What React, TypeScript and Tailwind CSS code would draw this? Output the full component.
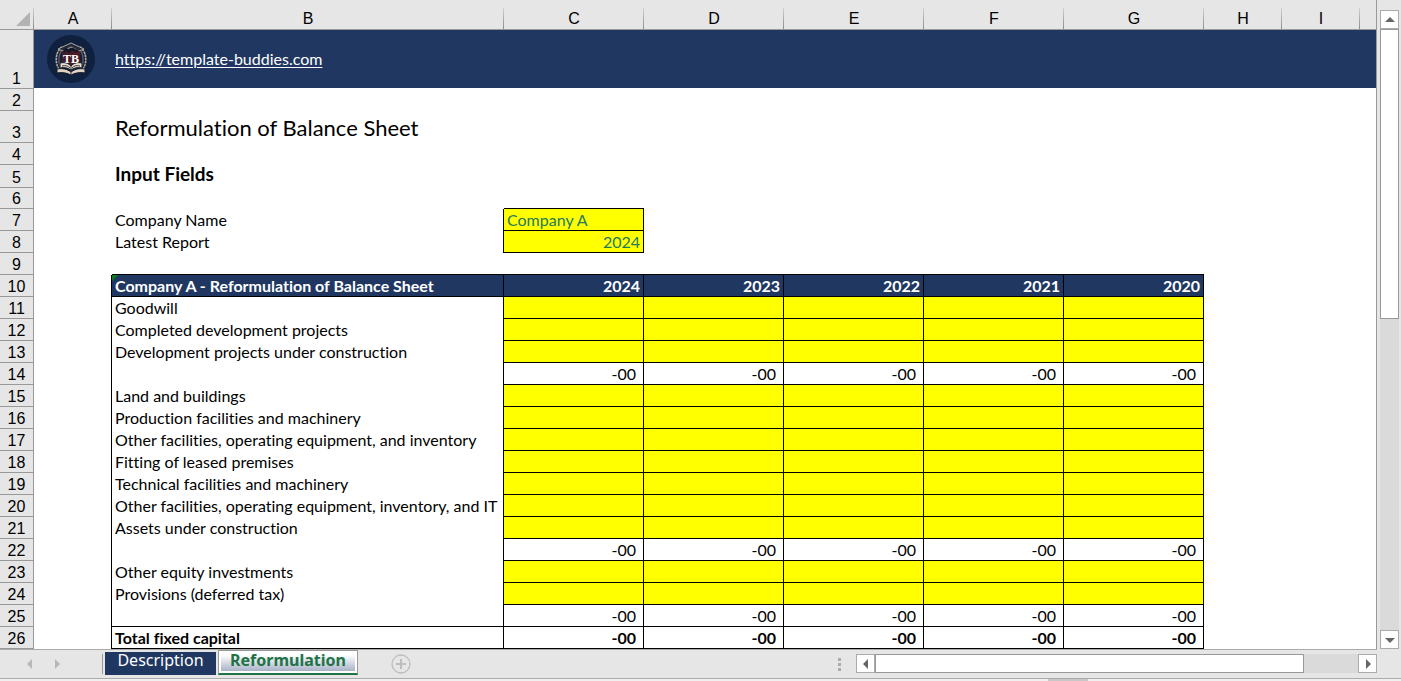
import { clsx } from "clsx";
import type { ReactNode } from "react";

type Row = { n: number; label: string; kind: "input" | "sum" | "total" };

const years = [2024, 2023, 2022, 2021, 2020];

const rows: Row[] = [
  { n: 11, label: "Goodwill", kind: "input" },
  { n: 12, label: "Completed development projects", kind: "input" },
  { n: 13, label: "Development projects under construction", kind: "input" },
  { n: 14, label: "", kind: "sum" },
  { n: 15, label: "Land and buildings", kind: "input" },
  { n: 16, label: "Production facilities and machinery", kind: "input" },
  { n: 17, label: "Other facilities, operating equipment, and inventory", kind: "input" },
  { n: 18, label: "Fitting of leased premises", kind: "input" },
  { n: 19, label: "Technical facilities and machinery", kind: "input" },
  { n: 20, label: "Other facilities, operating equipment, inventory, and IT", kind: "input" },
  { n: 21, label: "Assets under construction", kind: "input" },
  { n: 22, label: "", kind: "sum" },
  { n: 23, label: "Other equity investments", kind: "input" },
  { n: 24, label: "Provisions (deferred tax)", kind: "input" },
  { n: 25, label: "", kind: "sum" },
  { n: 26, label: "Total fixed capital", kind: "total" },
];

const inputClass = "block h-[21px] w-full bg-transparent px-[3px] leading-5 outline-none";

export default function App() {
  return (
    <div className="bg-[#e6e6e6] font-['Lato','Liberation_Sans',sans-serif] text-[16px] text-black [font-variant-ligatures:none]">
      <div className="flex">
        <div className="min-w-0 flex-1 overflow-hidden border-r border-[#999]">
          <Sheet />
        </div>
        <VerticalScrollbar />
      </div>
      <BottomBar />
    </div>
  );
}

function Sheet() {
  return (
    <table className="w-full table-fixed border-separate border-spacing-0 bg-white">
      <colgroup>
        <col className="w-[34px]" />
        <col className="w-[78px]" />
        <col className="w-[392px]" />
        {years.map((y) => (
          <col key={y} className="w-[140px]" />
        ))}
        <col className="w-[78px]" />
        <col className="w-[78px]" />
        <col />
      </colgroup>
      <thead>
        <tr className="h-[30px] bg-[#e6e6e6] font-['Liberation_Sans',sans-serif]">
          <th className="relative border-b border-[#999] p-0">
            <svg className="absolute right-1 bottom-[3px]" width="14" height="14" viewBox="0 0 14 14">
              <path d="M14 0v14H0z" fill="#b3b3b3" />
            </svg>
            <HeaderTick />
          </th>
          {["A", "B", "C", "D", "E", "F", "G", "H", "I"].map((c) => (
            <th key={c} scope="col" className="relative border-b border-[#999] p-0 pt-[9px] text-[16px] leading-5 font-normal">
              {c}
              <HeaderTick />
            </th>
          ))}
          <td className="border-b border-[#999]" />
        </tr>
      </thead>
      <tbody>
        <tr className="h-[59px]">
          <RowHeader n={1} />
          <td className="border-b border-b-white bg-[#203762] p-0">
            <Logo />
          </td>
          <td colSpan={9} className="border-b border-b-white bg-[#203762] p-0 pl-[3px] text-white">
            <a href="https://template-buddies.com" className="underline underline-offset-2">
              https://template-buddies.com
            </a>
          </td>
        </tr>
        <BlankRow n={2} className="h-[22px]" />
        <tr className="h-8">
          <RowHeader n={3} />
          <td />
          <td colSpan={9} className="p-0 pt-[2px] pl-[3px] text-[22px] leading-7">Reformulation of Balance Sheet</td>
        </tr>
        <BlankRow n={4} className="h-[22px]" />
        <tr className="h-[23px]">
          <RowHeader n={5} />
          <td />
          <td colSpan={9} className="p-0 pl-[3px] align-top text-[19px] leading-[18px] font-bold">Input Fields</td>
        </tr>
        <tr className="h-[21px]">
          <RowHeader n={6} />
          <td colSpan={2} />
          <td className="border-b border-black p-0" />
          <td colSpan={7} />
        </tr>
        <FieldRow n={7} id="company" label="Company Name">
          <input id="company" type="text" defaultValue="Company A" className={inputClass} />
        </FieldRow>
        <FieldRow n={8} id="latest" label="Latest Report">
          <input id="latest" type="text" defaultValue="2024" className={clsx(inputClass, "text-right")} />
        </FieldRow>
        <tr className="h-[22px]">
          <RowHeader n={9} />
          <td />
          <td colSpan={6} className="border-b border-black p-0" />
          <td colSpan={3} />
        </tr>

        {/* Table heading */}
        <tr className="h-[22px] font-bold text-white">
          <RowHeader n={10} />
          <td className="border-r border-black p-0" />
          <th className="relative border-r border-b border-black bg-[#203762] p-0 pl-[3px] text-left leading-5">
            <svg className="absolute top-0 left-0" width="6" height="6" viewBox="0 0 6 6">
              <path d="M0 0h6L0 6z" fill="#0a7d1c" />
            </svg>
            Company A - Reformulation of Balance Sheet
          </th>
          {years.map((y) => (
            <th key={y} className="border-r border-b border-black bg-[#203762] p-0 pr-[3px] text-right leading-5">
              {y}
            </th>
          ))}
          <td colSpan={3} />
        </tr>
        {rows.map((row) => (
          <DataRow key={row.n} row={row} />
        ))}
      </tbody>
    </table>
  );
}

function HeaderTick() {
  return <span className="absolute right-0 bottom-0 h-[21px] w-px bg-linear-to-b from-[#d0d0d0] to-[#8c8c8c]" />;
}

function RowHeader({ n }: { n: number }) {
  return (
    <th
      scope="row"
      className="border-r border-b border-[#999] bg-[#e6e6e6] p-0 text-center align-bottom font-['Liberation_Sans',sans-serif] text-[16px] leading-[18px] font-normal text-black"
    >
      {n}
    </th>
  );
}

function BlankRow({ n, className }: { n: number; className: string }) {
  return (
    <tr className={className}>
      <RowHeader n={n} />
      <td colSpan={10} />
    </tr>
  );
}

function FieldRow({ n, id, label, children }: { n: number; id: string; label: string; children: ReactNode }) {
  return (
    <tr className="h-[22px]">
      <RowHeader n={n} />
      <td />
      <td className="border-r border-black p-0 pl-[3px] leading-5">
        <label htmlFor={id}>{label}</label>
      </td>
      <td className="border-r border-b border-black bg-[#ffff00] p-0 text-[#1f7a5c]">{children}</td>
      <td colSpan={7} />
    </tr>
  );
}

function DataRow({ row }: { row: Row }) {
  const closed = row.n >= 25;
  return (
    <tr className={clsx("h-[22px]", row.kind === "total" && "font-bold")}>
      <RowHeader n={row.n} />
      <td className="border-r border-black p-0" />
      <td className={clsx("border-r border-black p-0 pl-[3px] leading-5 whitespace-nowrap", closed && "border-b")}>
        {row.label}
      </td>
      {years.map((y) =>
        row.kind === "input" ? (
          <td key={y} className="border-r border-b border-black bg-[#ffff00] p-0">
            <input type="text" aria-label={`${row.label} ${y}`} className={clsx(inputClass, "text-right")} />
          </td>
        ) : (
          <td key={y} className="border-r border-b border-black p-0 pr-[7px] text-right leading-5">
            -00
          </td>
        ),
      )}
      <td colSpan={3} />
    </tr>
  );
}

function Logo() {
  return (
    <svg className="ml-[13px] block" width="48" height="48" viewBox="0 0 48 48" fill="none">
      <circle cx="24" cy="24" r="24" fill="#10203f" />
      <path d="M14 37C7 29 8 17 15 12M34 37c7-8 6-20-1-25" stroke="#b5aa9b" strokeWidth="1.6" strokeDasharray="2.5 .7" />
      <path d="M16 36C10 29 11 19 16 14M32 36c6-7 5-17 0-22" stroke="#6e625c" strokeWidth="1.2" />
      <path d="M11 14l13-6 13 6-5 2-8-4-8 4z" fill="#252b3b" stroke="#b9b3a8" strokeWidth=".9" />
      <path d="M15 17c3-3 15-3 18 0v13H15z" fill="#481d28" />
      <path d="M17 17l2-3 3 3 4-3 3 2 2-1" stroke="#14182a" strokeWidth="2.4" />
      <path d="M13 28c5-1 8 0 11 3 3-3 6-4 11-3v5c-5-1-8 0-11 2-3-2-6-3-11-2z" fill="#e7dfd0" stroke="#171b2a" />
      <path d="M10 34c6-1 10 0 14 3 4-3 8-4 14-3v4c-6-1-10 0-14 2-4-2-8-3-14-2z" fill="#ddd3c1" stroke="#171b2a" />
      <path d="M24 31v8M15 31c4-1 6 0 8 2M33 31c-4-1-6 0-8 2" stroke="#3c3334" strokeWidth="1" />
      <text x="24" y="28" textAnchor="middle" fill="#fff" fontFamily="Liberation Serif, serif" fontSize="12" fontWeight="700">
        TB
      </text>
    </svg>
  );
}

function Arrow({ d }: { d: string }) {
  return (
    <svg width="10" height="10" viewBox="0 0 10 10">
      <path d={d} fill="#666" />
    </svg>
  );
}

const scrollButton = "flex size-[19px] shrink-0 items-center justify-center border border-[#ababab] bg-white";

function VerticalScrollbar() {
  return (
    <div className="flex w-6 flex-col pt-[10px] pr-[2px] pl-[3px]">
      <button type="button" aria-label="Scroll up" className={scrollButton}>
        <Arrow d="M0 7h10L5 2z" />
      </button>
      <div className="flex-1 bg-[#dadada]">
        <div className="h-[290px] border border-[#999] bg-white" />
      </div>
      <button type="button" aria-label="Scroll down" className={scrollButton}>
        <Arrow d="M0 3h10L5 8z" />
      </button>
    </div>
  );
}

function BottomBar() {
  return (
    <div>
      <div className="flex h-[29px] items-start">
        <div className="flex flex-1 items-start border-t border-[#ababab]">
          <div className="flex w-[102px] gap-5 pt-[9px] pl-[25px]">
            <button type="button" aria-label="Previous sheet">
              <svg width="8" height="10" viewBox="0 0 8 10"><path d="M7 0v10L2 5z" fill="#b8b8b8" /></svg>
            </button>
            <button type="button" aria-label="Next sheet">
              <svg width="8" height="10" viewBox="0 0 8 10"><path d="M2 0v10l5-5z" fill="#b8b8b8" /></svg>
            </button>
          </div>
          <div className="mt-1 h-5 w-[3px] border-l border-[#999]" />
          <button
            type="button"
            className="mt-[2px] h-[23px] w-[111px] bg-[#203762] pb-[7px] font-['Noto_Sans',sans-serif] text-[16px] leading-4 text-white"
          >
            Description
          </button>
          <button
            type="button"
            className="ml-[2px] h-[25px] w-[140px] border border-b-2 border-[#999] border-b-[#217346] bg-white px-[2px] pb-[2px] font-['Noto_Sans',sans-serif] text-[16px] font-bold text-[#217346]"
          >
            <span className="block h-5 bg-linear-to-b from-white from-20% to-[#a9b3c8] leading-[18px]">Reformulation</span>
          </button>
          <button type="button" aria-label="New sheet" className="mt-1 ml-[33px]">
            <svg width="20" height="20" viewBox="0 0 20 20" fill="none" stroke="#bdbdbd">
              <circle cx="10" cy="10" r="9" strokeWidth="1.3" />
              <path d="M10 5v10M5 10h10" strokeWidth="2" />
            </svg>
          </button>
          <div className="ml-auto flex pt-1">
            <div className="flex w-[18px] flex-col gap-[2px] pt-1">
              <span className="size-[3px] bg-[#ababab]" />
              <span className="size-[3px] bg-[#ababab]" />
              <span className="size-[3px] bg-[#ababab]" />
            </div>
            <button type="button" aria-label="Scroll left" className={scrollButton}>
              <Arrow d="M7 0v10L2 5z" />
            </button>
            <div className="w-[483px] bg-[#dadada]">
              <div className="h-[19px] w-[429px] border border-[#999] bg-white" />
            </div>
            <button type="button" aria-label="Scroll right" className={scrollButton}>
              <Arrow d="M3 0v10l5-5z" />
            </button>
          </div>
        </div>
        <div className="w-6" />
      </div>
      <div className="flex h-[3px] justify-end border-t border-[#ababab] bg-[#f0f0f0] pr-[313px]">
        <span className="w-10 bg-[#c8c8c8]" />
      </div>
    </div>
  );
}
